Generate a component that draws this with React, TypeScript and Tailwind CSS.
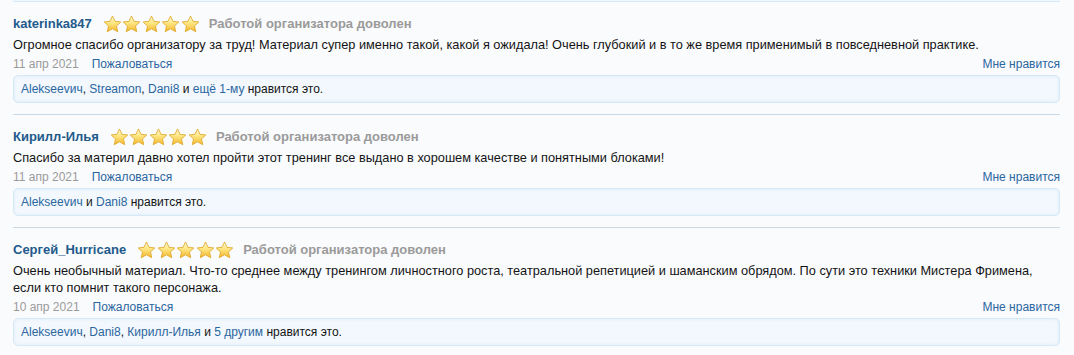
import React from "react"

type Review = {
  author: string
  text: string
  date: string
  likes: { name: string; link: boolean }[]
}

const reviews: Review[] = [
  {
    author: "katerinka847",
    text: "Огромное спасибо организатору за труд! Материал супер именно такой, какой я ожидала! Очень глубокий и в то же время применимый в повседневной практике.",
    date: "11 апр 2021",
    likes: [
      { name: "Alekseevич", link: true },
      { name: ", ", link: false },
      { name: "Streamon", link: true },
      { name: ", ", link: false },
      { name: "Dani8", link: true },
      { name: " и ", link: false },
      { name: "ещё 1-му", link: true },
      { name: " нравится это.", link: false },
    ],
  },
  {
    author: "Кирилл-Илья",
    text: "Спасибо за материл давно хотел пройти этот тренинг все выдано в хорошем качестве и понятными блоками!",
    date: "11 апр 2021",
    likes: [
      { name: "Alekseevич", link: true },
      { name: " и ", link: false },
      { name: "Dani8", link: true },
      { name: " нравится это.", link: false },
    ],
  },
  {
    author: "Сергей_Hurricane",
    text: "Очень необычный материал. Что-то среднее между тренингом личностного роста, театральной репетицией и шаманским обрядом. По сути это техники Мистера Фримена, если кто помнит такого персонажа.",
    date: "10 апр 2021",
    likes: [
      { name: "Alekseevич", link: true },
      { name: ", ", link: false },
      { name: "Dani8", link: true },
      { name: ", ", link: false },
      { name: "Кирилл-Илья", link: true },
      { name: " и ", link: false },
      { name: "5 другим", link: true },
      { name: " нравится это.", link: false },
    ],
  },
]

function Star() {
  return (
    <svg width="19" height="18" viewBox="0 0 24 23" className="shrink-0">
      <defs>
        <linearGradient id="starFill" x1="0" y1="0" x2="0" y2="1">
          <stop offset="0%" stopColor="#fffce0" />
          <stop offset="40%" stopColor="#fee98a" />
          <stop offset="100%" stopColor="#f3b72a" />
        </linearGradient>
      </defs>
      <path
        d="M12 1.2l3.2 6.9 7.4.8-5.5 5.1 1.6 7.4L12 17.6l-6.7 3.8 1.6-7.4-5.5-5.1 7.4-.8z"
        fill="url(#starFill)"
        stroke="#e0a82a"
        strokeWidth="1.1"
        strokeLinejoin="round"
      />
    </svg>
  )
}

function ReviewItem({ review, last }: { review: Review; last: boolean }) {
  return (
    <div className={`pt-[9px] ${last ? "" : "pb-[11px] border-b border-[#c9d9e6]"}`}>
      <div className="flex items-center h-[25px]">
        <span className="font-bold text-[13px] text-[#235a8c]">{review.author}</span>
        <div className="flex ml-[11px] mr-[9px] gap-[0.5px]">
          {[0, 1, 2, 3, 4].map((i) => (
            <Star key={i} />
          ))}
        </div>
        <span className="font-bold text-[13px] text-[#9a9a9a]">Работой организатора доволен</span>
      </div>
      <p className="text-[12.75px] leading-[17px] text-[#141414]">{review.text}</p>
      <div className="flex items-center justify-between h-[22px] text-[12px]">
        <div className="flex gap-[13px]">
          <span className="text-[#9a9a9a]">{review.date}</span>
          <span className="text-[#2b66a0]">Пожаловаться</span>
        </div>
        <span className="text-[#2b66a0]">Мне нравится</span>
      </div>
      <div className="h-[28px] flex items-center px-[7px] rounded-[5px] border border-[#d6e8f5] bg-[#f2f8fd] text-[12px] text-[#141414] shadow-[inset_0_0_3px_rgba(200,225,245,0.6)]">
        {review.likes.map((l, i) =>
          l.link ? (
            <span key={i} className="text-[#2b66a0]">
              {l.name}
            </span>
          ) : (
            <span key={i} className="whitespace-pre">{l.name}</span>
          )
        )}
      </div>
    </div>
  )
}

export default function App() {
  return (
    <div className="w-[1074px] h-[355px] overflow-hidden bg-[#fafbfd] font-['Liberation_Sans',Arial,sans-serif]">
      <div className="ml-[13px] w-[1047px]">
        <div className="h-[2px] rounded-b-[5px] border-x border-b border-[#d6e8f5] bg-[#f2f8fd]" />
        {reviews.map((r, i) => (
          <ReviewItem key={r.author} review={r} last={i === reviews.length - 1} />
        ))}
      </div>
    </div>
  )
}
